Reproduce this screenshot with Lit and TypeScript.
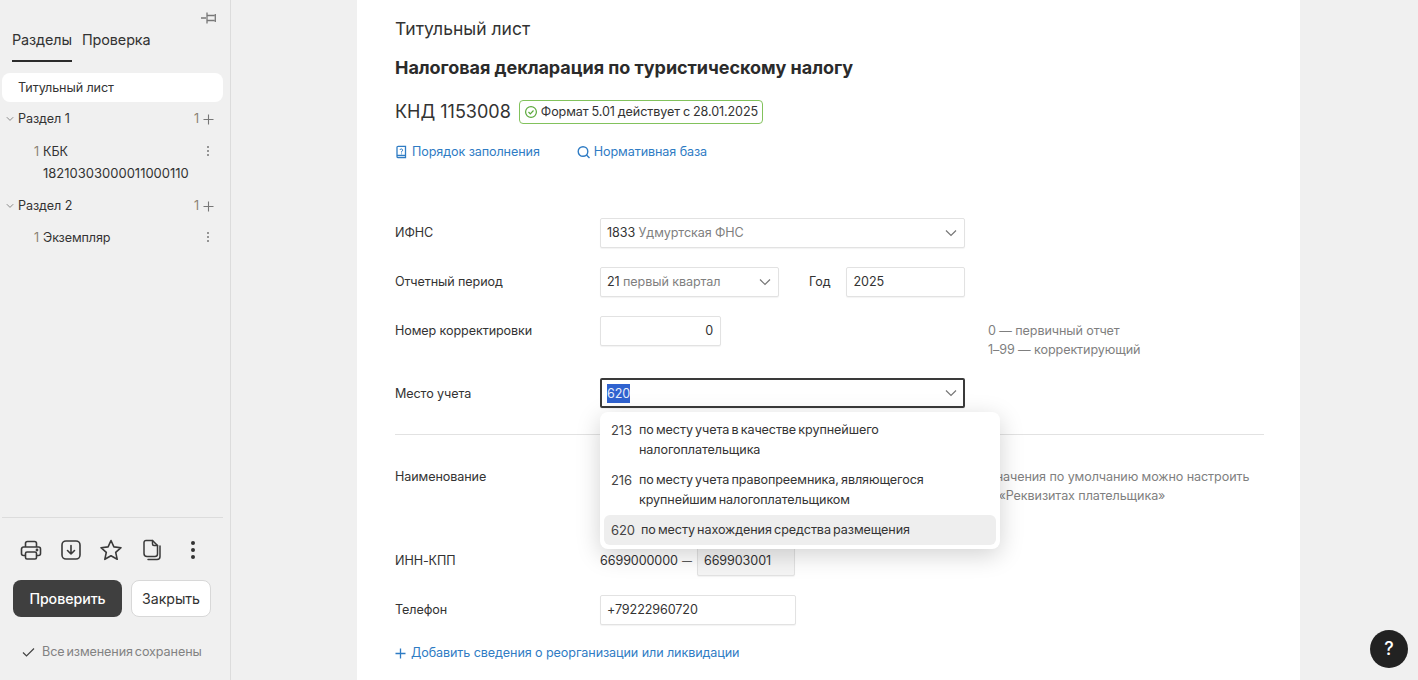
import { LitElement, html, css, svg } from "lit";
import { customElement } from "lit/decorators.js";

const chevron = svg`<path d="M2 4.5 L7 9.5 L12 4.5" fill="none" stroke="#777" stroke-width="1.2"/>`;

@customElement("app-root")
export class AppRoot extends LitElement {
  static styles = css`
    :host { display: flex; height: 680px; width: 1418px; overflow: hidden; position: relative; background: #f0f0f0; font-family: Inter, "Noto Sans", sans-serif; font-size: 12.6px; letter-spacing: -0.1px; color: #333; line-height: 20px; }
    * { box-sizing: border-box; }
    svg { display: block; flex: none; }
    .side { width: 231px; flex: none; height: 680px; border-right: 1px solid #dcdcdc; display: flex; flex-direction: column; position: relative; padding: 0 7px 0 2px; }
    .pin { position: absolute; left: 200px; top: 10px; }
    .tabs { display: flex; gap: 10px; margin: 30px 0 0 10px; font-size: 14.4px; height: 32px; }
    .tab { height: 32px; }
    .tab.on { border-bottom: 2px solid #2b2b2b; }
    .sel { margin-top: 11px; height: 29px; border-radius: 8px; background: #fff; display: flex; align-items: center; padding-left: 16px; }
    .group { display: flex; align-items: center; height: 20px; margin-top: 7px; padding-left: 4px; }
    .group .name { margin-left: 4px; flex: 1; }
    .num { color: #8a8172; }
    .plus { margin: 0 9px 0 4px; }
    .sub { display: flex; padding-left: 32px; margin-top: 12px; line-height: 22px; }
    .sub .txt { margin-left: 4px; flex: 1; }
    .kbk { display: block; font-size: 13px; letter-spacing: 0; margin-top: -1px; }
    .dots { margin: 4px 13px 0 0; }
    .g2 { margin-top: 12px; }
    .g2 + .sub { margin-top: 11px; }
    .spacer { flex: 1; }
    .foot { border-top: 1px solid #dcdcdc; height: 163px; flex: none; }
    .tools { display: flex; align-items: center; gap: 16px; padding: 2px 0 0 17px; height: 62px; }
    .nudge { margin-left: 1px; }
    .btns { display: flex; gap: 9px; padding-left: 11px; }
    .btn { height: 37px; border-radius: 8px; display: flex; align-items: center; justify-content: center; font-size: 14.2px; letter-spacing: -0.05px; }
    .btn.dark { width: 109px; background: #3f3f3f; color: #fff; font-weight: 500; }
    .btn.light { width: 80px; background: #fff; border: 1px solid #d8d8d8; color: #333; }
    .saved { display: flex; align-items: center; gap: 7px; color: #828282; padding-left: 20px; margin-top: 25px; word-spacing: -1.5px; }

    .main { flex: 1; padding-left: 126px; }
    .sheet { width: 943px; height: 680px; background: #fff; padding: 0 36px 0 38px; position: relative; }
    .title { font-size: 17.5px; padding-top: 17px; height: 41px; line-height: 24px; font-weight: 400; letter-spacing: 0; }
    .h { font-size: 18px; font-weight: 700; line-height: 24px; margin-top: 15px; color: #2b2b2b; letter-spacing: -0.05px; }
    .knd { display: flex; align-items: center; margin-top: 20px; height: 24px; font-size: 18px; letter-spacing: 0; }
    .badge { margin-left: 8px; height: 24px; width: 244px; border: 1px solid #82c25c; border-radius: 4px; display: flex; align-items: center; gap: 3px; font-size: 12.6px; letter-spacing: -0.1px; word-spacing: -0.5px; padding-left: 4px; white-space: nowrap; }
    .links { display: flex; gap: 37px; margin-top: 18px; color: #2f7cc4; height: 20px; }
    .link { display: flex; align-items: center; gap: 5px; }
    .link .search { margin-right: -1px; }
    .row { display: flex; align-items: center; }
    .lab { width: 205px; flex: none; }
    .f { height: 30px; border: 1px solid #e2e2e2; border-radius: 2px; display: flex; align-items: center; padding: 0 6px; background: #fff; box-shadow: 0 1px 1px rgba(0,0,0,.05); }
    .f.sel-f { justify-content: space-between; }
    .f .grey { color: #7f7f7f; }
    .w365 { width: 365px; }
    .r1 { margin-top: 56px; }
    .r2, .r3 { margin-top: 19px; }
    .r2 .lab2 { margin: 0 16px 0 30px; }
    .w179 { width: 179px; }
    .w119 { width: 119px; }
    .w121 { width: 121px; justify-content: flex-end; padding-right: 7px; }
    .r3 { height: 30px; }
    .hint { color: #7f7f7f; margin-left: 267px; line-height: 19px; margin-top: 5px; white-space: nowrap; align-self: flex-start; }
    .r4 { margin-top: 32px; }
    .r4 .lab { padding-top: 1px; }
    .focus { border: 2px solid #3a3a3a; padding: 0 5px; }
    .mark { background: #2f62cf; color: #e8eefc; height: 19px; line-height: 19px; }
    hr { border: 0; border-top: 1px solid #e2e2e2; margin: 26px 0 0; }
    .r5 { margin-top: 27px; align-items: flex-start; height: 85px; }
    .lab5 { margin-top: 5px; }
    .ta { width: 365px; height: 65px; }
    .hint2 { color: #7f7f7f; margin: 5px 0 0 23px; white-space: nowrap; line-height: 19px; }
    .r6 { margin-top: -1px; }
    .inn { white-space: nowrap; display: flex; align-items: center; }
    .dash { margin: 0 5px 0 4px; font-size: 10px; letter-spacing: 0; }
    .kpp { width: 98px; background: #f5f5f5; }
    .r7 { margin-top: 19px; }
    .w196 { width: 196px; }
    .add { display: flex; align-items: center; gap: 5px; color: #2f7cc4; margin-top: 18px; }

    .menu { position: absolute; left: 243px; top: 412px; width: 400px; height: 137px; background: #fff; border-radius: 8px; box-shadow: 0 6px 24px rgba(0,0,0,.18); padding: 3px 4px 4px; word-spacing: -1.2px; }
    .opt { display: flex; padding: 5px 7px; border-radius: 6px; line-height: 20px; height: 50px; }
    .opt .code { width: 28px; flex: none; color: #444; font-size: 13px; }
    .opt.cur { height: 30px; background: #eeeeee; }
    .opt.cur .code { width: 30px; }
    .help { position: absolute; left: 1370px; top: 630px; width: 38px; height: 38px; border-radius: 50%; background: #222; color: #fff; display: flex; align-items: center; justify-content: center; font-size: 18px; font-weight: 500; }
  `;

  render() {
    const dots = html`<svg class="dots" width="4" height="12" viewBox="0 0 4 12"><circle cx="2" cy="2" r="1" fill="#777"/><circle cx="2" cy="6" r="1" fill="#777"/><circle cx="2" cy="10" r="1" fill="#777"/></svg>`;
    const arrow = html`<svg width="8" height="8" viewBox="0 0 8 8"><path d="M.8 2.2 L4 5.4 L7.2 2.2" fill="none" stroke="#888" stroke-width="1"/></svg>`;
    const plus = html`<svg class="plus" width="11" height="11" viewBox="0 0 11 11"><path d="M5.5 0.5V10.5M.5 5.5H10.500" stroke="#777" stroke-width="1.1"/></svg>`;
    return html`
      <aside class="side">
        <svg class="pin" width="17" height="15" viewBox="0 0 17 15" fill="none" stroke="#777" stroke-width="1.300"><path d="M1 8H6M7 2.500V13.500M7 5.500H14.500M7 10.500H14.500M15.300 4V12"/></svg>
        <div class="tabs"><div class="tab on">Разделы</div><div class="tab">Проверка</div></div>
        <div class="sel">Титульный лист</div>
        <div class="group">${arrow}<span class="name">Раздел 1</span><span class="num">1</span>${plus}</div>
        <div class="sub"><span class="num">1</span><span class="txt">КБК<span class="kbk">18210303000011000110</span></span>${dots}</div>
        <div class="group g2">${arrow}<span class="name">Раздел 2</span><span class="num">1</span>${plus}</div>
        <div class="sub"><span class="num">1</span><span class="txt">Экземпляр</span>${dots}</div>
        <div class="spacer"></div>
        <div class="foot">
          <div class="tools">
            <svg width="24" height="24" viewBox="0 0 24 24" fill="none" stroke="#3a3a3a" stroke-width="1.6" stroke-linejoin="round"><path d="M6.500 9V5.500A2 2 0 0 1 8.500 3.500H15.500A2 2 0 0 1 17.500 5.500V9M6.500 17.500H4.500A2 2 0 0 1 2.500 15.500V11A2 2 0 0 1 4.500 9H19.500A2 2 0 0 1 21.500 11V15.500A2 2 0 0 1 19.500 17.500H17.500"/><rect x="6.500" y="14" width="11" height="7" rx="1.500"/><circle cx="18" cy="12" r=".6" fill="#333"/></svg>
            <svg width="24" height="24" viewBox="0 0 24 24" fill="none" stroke="#3a3a3a" stroke-width="1.6" stroke-linecap="round" stroke-linejoin="round"><rect x="3" y="3" width="18" height="18" rx="4"/><path d="M12 7.500V16M8.500 12.500L12 16L15.500 12.500"/></svg>
            <svg width="24" height="24" viewBox="0 0 24 24" fill="none" stroke="#3a3a3a" stroke-width="1.6" stroke-linejoin="round"><path d="M12 2.500L14.900 8.900L22 9.700L16.700 14.400L18.200 21.300L12 17.800L5.800 21.300L7.300 14.400L2 9.700L9.100 8.900Z"/></svg>
            <svg class="nudge" width="24" height="24" viewBox="0 0 24 24" fill="none" stroke="#3a3a3a" stroke-width="1.500" stroke-linejoin="round" stroke-linecap="round"><path d="M6 2.500H12.500L17.500 7.500V16A2.500 2.500 0 0 1 15 18.500H7A3 3 0 0 1 4 15.500V4.500A2 2 0 0 1 6 2.500Z"/><path d="M12.500 2.500V6A1.500 1.500 0 0 0 14 7.500H17.500"/><path d="M20 8V18.500A3 3 0 0 1 17 21.500H8"/></svg>
            <svg class="nudge" width="24" height="24" viewBox="0 0 24 24" fill="#333"><circle cx="12" cy="5" r="2"/><circle cx="12" cy="12" r="2"/><circle cx="12" cy="19" r="2"/></svg>
          </div>
          <div class="btns"><div class="btn dark">Проверить</div><div class="btn light">Закрыть</div></div>
          <div class="saved"><svg width="13" height="10" viewBox="0 0 13 10"><path d="M1 5.500L4.500 9L12 1.500" fill="none" stroke="#444" stroke-width="1.200"/></svg>Все изменения сохранены</div>
        </div>
      </aside>
      <main class="main">
        <section class="sheet">
          <div class="title">Титульный лист</div>
          <div class="h">Налоговая декларация по туристическому налогу</div>
          <div class="knd">КНД 1153008
            <div class="badge"><svg width="14" height="14" viewBox="0 0 14 14" fill="none" stroke="#5aa83a" stroke-width="1.200"><circle cx="7" cy="7" r="5.400"/><path d="M4.500 7L6.300 8.800L9.500 5.500"/></svg>Формат 5.01 действует с 28.01.2025</div>
          </div>
          <div class="links">
            <div class="link"><svg width="12" height="14" viewBox="0 0 12 14" fill="none" stroke="#2f7cc4" stroke-width="1.300"><path d="M2 11.500V2.500A1.200 1.200 0 0 1 3.200 1.300H10.500V12.700H3.200A1.200 1.200 0 0 1 2 11.500ZM2 10.500H10.500"/><path d="M5 5A1.300 1.300 0 1 1 6.500 6.500V7.500M6.500 8.500V9.300" stroke-width="1"/></svg>Порядок заполнения</div>
            <div class="link"><svg class="search" width="13" height="14" viewBox="0 0 13 14" fill="none" stroke="#2f7cc4" stroke-width="1.400"><circle cx="6" cy="6.500" r="4.800"/><path d="M9.500 10L12.500 13"/></svg>Нормативная база</div>
          </div>
          <div class="row r1"><div class="lab">ИФНС</div><div class="f sel-f w365"><span>1833 <span class="grey">Удмуртская ФНС</span></span><svg width="14" height="14" viewBox="0 0 14 14">${chevron}</svg></div></div>
          <div class="row r2"><div class="lab">Отчетный период</div><div class="f sel-f w179"><span>21 <span class="grey">первый квартал</span></span><svg width="14" height="14" viewBox="0 0 14 14">${chevron}</svg></div><div class="lab2">Год</div><div class="f w119">2025</div></div>
          <div class="row r3"><div class="lab">Номер корректировки</div><div class="f w121">0</div><div class="hint">0 — первичный отчет<br />1–99 — корректирующий</div></div>
          <div class="row r4"><div class="lab">Место учета</div><div class="f sel-f w365 focus"><span class="mark">620</span><svg width="14" height="14" viewBox="0 0 14 14">${chevron}</svg></div></div>
          <hr />
          <div class="row r5"><div class="lab lab5">Наименование</div><div class="f ta"></div><div class="hint2">Значения по умолчанию можно настроить<br />в «Реквизитах плательщика»</div></div>
          <div class="row r6"><div class="lab">ИНН-КПП</div><div class="inn">6699000000<span class="dash">—</span></div><div class="f kpp">669903001</div></div>
          <div class="row r7"><div class="lab">Телефон</div><div class="f w196">+79222960720</div></div>
          <div class="add"><svg width="11" height="11" viewBox="0 0 11 11"><path d="M5.500 .5V10.500M.5 5.500H10.500" stroke="#2f7cc4" stroke-width="1.300"/></svg>Добавить сведения о реорганизации или ликвидации</div>
          <div class="menu">
            <div class="opt"><span class="code">213</span><span>по месту учета в качестве крупнейшего налогоплательщика</span></div>
            <div class="opt"><span class="code">216</span><span>по месту учета правопреемника, являющегося крупнейшим налогоплательщиком</span></div>
            <div class="opt cur"><span class="code">620</span><span>по месту нахождения средства размещения</span></div>
          </div>
        </section>
      </main>
      <div class="help">?</div>
    `;
  }
}
